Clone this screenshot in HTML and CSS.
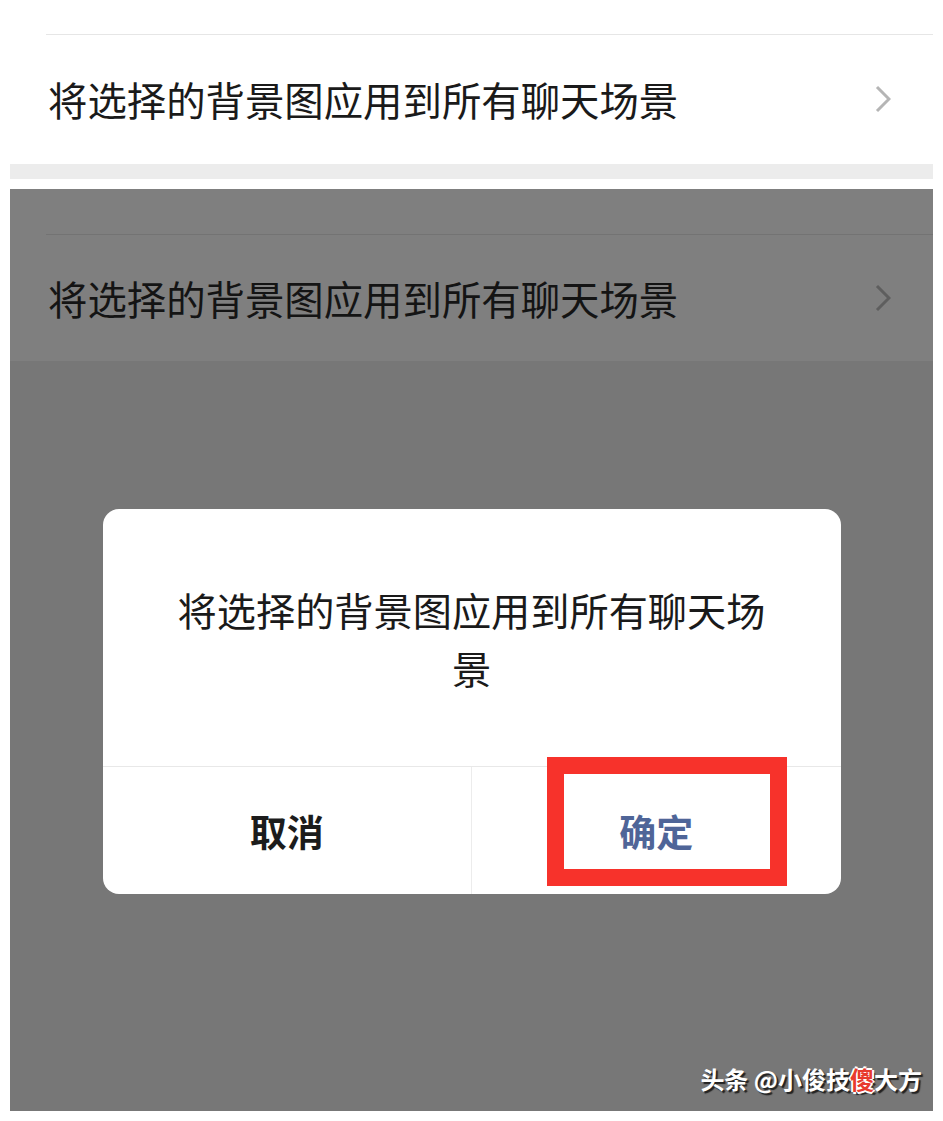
FILE: index.html
```html
<!DOCTYPE html>
<html lang="zh-CN">
<head>
    <meta charset="UTF-8">
    <meta name="viewport" content="width=device-width, initial-scale=1.0">
    <title>聊天背景</title>
    <link rel="stylesheet" href="styles.css">
</head>
<body>
    <!-- avant -->
    <section class="settings">
        <div class="row">
            <span>将选择的背景图应用到所有聊天场景</span>
            <svg class="chevron" width="16" height="28" viewBox="0 0 16 28"><polyline points="2,2 14,14 2,26" /></svg>
        </div>
    </section>
    <div class="band"></div>

    <!-- apres: boite de dialogue -->
    <section class="shot">
        <div class="shot-top">
            <div class="row dim">
                <span>将选择的背景图应用到所有聊天场景</span>
                <svg class="chevron" width="16" height="28" viewBox="0 0 16 28"><polyline points="2,2 14,14 2,26" /></svg>
            </div>
        </div>

        <div class="dialog">
            <p class="dialog-msg">将选择的背景图应用到所有聊天场景</p>
            <div class="dialog-btns">
                <div class="btn cancel">取消</div>
                <div class="btn ok">确定<span class="mark"></span></div>
            </div>
        </div>

        <div class="watermark">头条 @小俊技<span class="red">傻</span>大方</div>
    </section>
</body>
</html>
```

FILE: styles.css
```css
body {
    margin: 0;
    background: #fff;
    font-family: "Noto Sans CJK SC", "Noto Sans", sans-serif;
    color: #1a1a1a;
}

/* HAUT */
.settings {
    padding-top: 34px;
}

.row {
    display: flex;
    align-items: center;
    justify-content: space-between;
    height: 128px;
    margin-left: 46px;
    margin-right: 10px;
    padding-right: 42px;
    border-top: 1px solid #e6e6e6;
    font-size: 39.4px;
    line-height: 1;
}
.row span {margin-left: 2px;}

.chevron polyline {
    fill: none;
    stroke: #b5b5b5;
    stroke-width: 3;
}

.band {
    height: 15px;
    margin: 1px 10px 10px;
    background: #ececec;
}

/* CAPTURE GRISE */
.shot {
    position: relative;
    height: 922px;
    margin: 0 10px;
    background: #777;
    display: flex;
    flex-direction: column;
    align-items: center;
}

.shot-top {
    align-self: stretch;
    height: 172px;
    padding-top: 45px;
    box-sizing: border-box;
    background: #7f7f7f;
}

.row.dim {
    margin-left: 36px;
    margin-right: 0;
    height: 126px;
    border-top-color: #737373;
    color: #141414;
}
.row.dim .chevron polyline {stroke: #5e5e5e;}

.dialog {
    margin-top: 148px;
    width: 738px;
    background: #fff;
    border-radius: 16px;
}

.dialog-msg {
    margin: 0;
    padding: 71px 65px 70px;
    text-align: center;
    font-size: 39.2px;
    line-height: 58px;
    color: #1a1a1a;
}

.dialog-btns {
    display: flex;
    height: 127px;
    border-top: 1px solid #e8e8e8;
}

.btn {
    flex: 1;
    display: flex;
    align-items: center;
    justify-content: center;
    font-size: 37px;
    font-weight: bold;
}
.cancel {
    color: #1c1c1c;
    border-right: 1px solid #ececec;
}
.ok {
    position: relative;
    color: #4f6598;
}

.mark {
    position: absolute;
    left: 75px;
    top: -10px;
    width: 240px;
    height: 129px;
    box-sizing: border-box;
    border: 17px solid #f7322b;
}

.watermark {
    position: absolute;
    right: 11px;
    bottom: 15px;
    font-size: 24px;
    font-weight: bold;
    color: #fff;
    text-shadow: 2px 2px 1px #222;
}
.watermark .red {
    color: #e83a2e;
    text-shadow: -2px 0 #fff, 2px 0 #fff, 0 -2px #fff, 0 2px #fff, 3px 3px 1px #222;
}
```
